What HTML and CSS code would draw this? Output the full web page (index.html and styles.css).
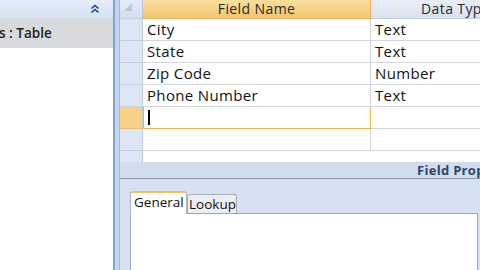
FILE: index.html
```html
<!DOCTYPE html>
<html>
<head>
<meta charset="utf-8">
<link rel="stylesheet" href="styles.css">
</head>
<body>
<div class="app">
  <div class="nav">
    <div class="nav-head">
      <svg class="chev" width="10" height="10" viewBox="0 0 10 10"><path d="M1.5 4.5 L5 1.5 L8.5 4.5 M1.5 8.5 L5 5.5 L8.5 8.5" fill="none" stroke="#15428b" stroke-width="1.6"/></svg>
    </div>
    <div class="nav-group">s : Table</div>
    <div class="nav-body"></div>
  </div>
  <div class="splitter"></div>
  <div class="main">
    <div class="grid">
      <div class="row head">
        <div class="sel corner"><svg width="10" height="10" viewBox="0 0 10 10"><path d="M1 9 L9 1 L9 9 Z" fill="#b5c8e2"/></svg></div>
        <div class="cell c1 hfield">Field Name</div>
        <div class="cell c2 htype">Data Type</div>
      </div>
      <div class="row"><div class="sel"></div><div class="cell c1">City</div><div class="cell c2">Text</div></div>
      <div class="row"><div class="sel"></div><div class="cell c1">State</div><div class="cell c2">Text</div></div>
      <div class="row"><div class="sel"></div><div class="cell c1">Zip Code</div><div class="cell c2">Number</div></div>
      <div class="row"><div class="sel"></div><div class="cell c1">Phone Number</div><div class="cell c2">Text</div></div>
      <div class="row cur"><div class="sel"></div><div class="cell c1 edit"><span class="caret"></span></div><div class="cell c2"></div></div>
      <div class="row"><div class="sel"></div><div class="cell c1"></div><div class="cell c2"></div></div>
      <div class="row tail"><div class="sel"></div></div>
    </div>
    <div class="fp-bar">Field Properties</div>
    <div class="props">
      <div class="tabs">
        <div class="tab active">General</div>
        <div class="tab">Lookup</div>
      </div>
      <div class="panel"></div>
    </div>
  </div>
</div>
</body>
</html>
```
FILE: styles.css
```css
* { box-sizing: border-box; }
html, body { margin: 0; padding: 0; width: 480px; height: 270px; overflow: hidden; }
body { font-family: "Open Sans", "Noto Sans", sans-serif; background: #fff; }
.app { display: flex; width: 480px; height: 270px; }
.nav { width: 113px; display: flex; flex-direction: column; background: #fff; }
.nav-head { height: 18px; background: linear-gradient(#e6eef9, #d6e3f3); display: flex; justify-content: flex-end; align-items: center; padding-right: 13px; }
.nav-group { height: 30px; background: #d9dadd; font-weight: 600; font-size: 13.5px; color: #222; display: flex; align-items: center; margin-left: -1px; white-space: nowrap; }
.nav-body { flex: 1; background: #fff; }
.splitter { width: 7px; background: #c4d6ee; border-left: 2px solid #7fa3d3; border-right: 1px solid #9bb8de; }
.main { flex: 1; display: flex; flex-direction: column; overflow: hidden; background: #d4e0f0; }
.grid { height: 162px; background: #fff; display: flex; flex-direction: column; }
.row { display: flex; height: 22px; flex: none; }
.row.head { height: 19px; }
.sel { width: 23px; flex: none; background: #dde7f4; border-right: 1px solid #b9c9de; border-bottom: 1px solid #c3d0e2; }
.corner { display: flex; align-items: flex-start; justify-content: flex-start; padding: 2px 0 0 3px; background: linear-gradient(#e3ebf6, #d3dff0); }
.cell { flex: none; border-right: 1px solid #d4d8de; border-bottom: 1px solid #d4d8de; font-size: 15px; letter-spacing: 0.35px; color: #111; padding-left: 4px; line-height: 21px; white-space: nowrap; overflow: hidden; }
.c1 { width: 228px; }
.c2 { width: 200px; }
.hfield { background: linear-gradient(#fadf9f, #f2c46f); text-align: center; padding-left: 0; font-size: 14px; letter-spacing: 0.4px; color: #2a2a2a; line-height: 18px; border-right: 1px solid #e6b45c; border-bottom: 1px solid #e9b866; }
.htype { background: linear-gradient(#e9eff8, #d8e2f0); padding-left: 50px; font-size: 14px; letter-spacing: 0.4px; color: #2a2a2a; line-height: 18px; border-bottom: 1px solid #c3d0e2; }
.cur .sel { background: #f8d189; border-bottom-color: #e9c07a; }
.edit { border: 1px solid #e8b64f; border-top: none; display: flex; align-items: center; padding-left: 4px; }
.caret { width: 2px; height: 15px; background: #000; }
.row.tail { flex: 1; }
.row.tail .sel { border-bottom: none; }
.fp-bar { height: 17px; background: #d1ddec; border-bottom: 1px solid #8d9db2; font-size: 13px; font-weight: 700; letter-spacing: 0.3px; color: #2b466c; line-height: 16px; white-space: nowrap; overflow: hidden; padding-left: 297px; }
.props { flex: 1; background: #d6e2f1; padding: 11px 2px 0 10px; display: flex; flex-direction: column; }
.tabs { display: flex; align-items: flex-end; height: 23px; }
.tab { font-size: 13.5px; color: #111; white-space: nowrap; }
.tab.active { width: 57px; height: 23px; background: #fff; border: 1px solid #aeb4bd; border-top: 2px solid #f2c25b; border-bottom: none; border-radius: 3px 3px 0 0; padding-left: 3px; line-height: 19px; position: relative; z-index: 1; margin-bottom: -1px; }
.tab:not(.active) { width: 50px; height: 19px; background: #eceef3; border: 1px solid #a9b0bb; border-bottom: none; border-radius: 3px 3px 0 0; line-height: 18px; padding-left: 1px; }
.panel { flex: 1; background: #fff; border: 1px solid #9ea4ad; border-bottom: none; }
```
